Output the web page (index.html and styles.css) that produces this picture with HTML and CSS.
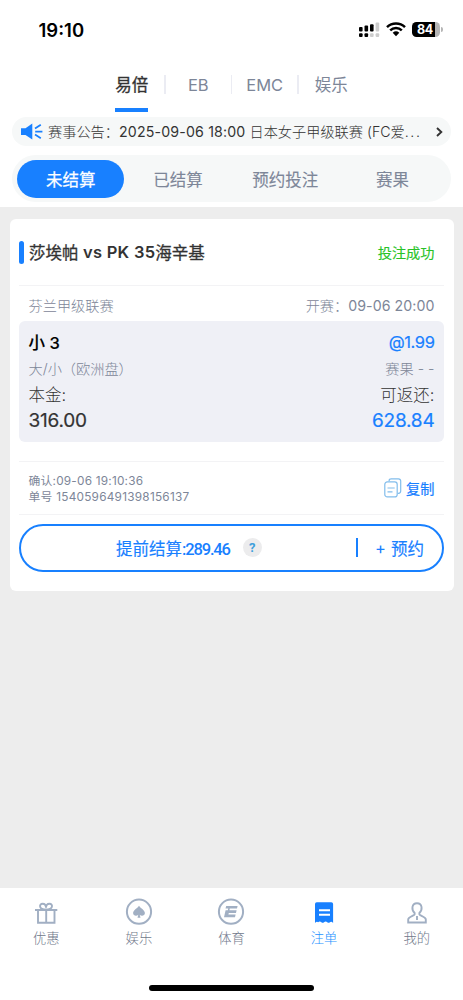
FILE: index.html
```html
<!DOCTYPE html>
<html lang="zh-CN">
<head>
<meta charset="utf-8">
<meta name="viewport" content="width=device-width, initial-scale=1">
<title>注单</title>
<link rel="stylesheet" href="styles.css">
</head>
<body>
<div class="app">
  <header class="status">
    <span class="clock">19:10</span>
    <div class="indicators">
      <svg class="signal" width="21" height="16" viewBox="0 0 21 16">
        <g fill="#000"><rect x="0" y="5" width="3.6" height="4.6" rx="1"/><rect x="5.5" y="3.6" width="3.6" height="6" rx="1"/><rect x="11" y="2.3" width="3.6" height="7.3" rx="1"/><rect x="0" y="11.3" width="3.6" height="3.8" rx="1"/><rect x="5.5" y="11.3" width="3.6" height="3.8" rx="1"/></g>
        <g fill="#ccc"><rect x="16.6" y="0.6" width="3.6" height="9" rx="1"/><rect x="11" y="11.3" width="3.6" height="3.8" rx="1"/><rect x="16.6" y="11.3" width="3.6" height="3.8" rx="1"/></g>
      </svg>
      <svg class="wifi" width="20" height="15" viewBox="0 0 20 15">
        <path d="M1 5.1A13 13 0 0 1 19 5.1M4.2 8.4a8.4 8.4 0 0 1 11.6 0" fill="none" stroke="#000" stroke-width="2.5"/>
        <path d="M6.7 10.8a5 5 0 0 1 6.6 0L10 14.2z"/>
      </svg>
      <div class="battery"><span class="level">84</span></div>
    </div>
  </header>

  <nav class="brands">
    <a class="brand active">易倍</a><a class="brand">EB</a><a class="brand">EMC</a><a class="brand">娱乐</a>
  </nav>

  <div class="notice">
    <svg class="horn" width="22" height="17" viewBox="0 0 22 17">
      <path d="M0 5.2h4.5L11.3.4v16.2L4.5 12H0z" fill="#1880ff"/>
      <path d="M14 5.5l5.8-3.7M14.2 8.6h7.2M14 11.6l5.8 3.6" stroke="#1880ff" stroke-width="1.8" fill="none"/>
    </svg>
    <span class="notice-text">赛事公告：<span class="notice-date">2025-09-06 18:00</span> 日本女子甲级联赛 (FC爱<span class="dots">...</span></span>
    <svg class="chevron" width="7" height="10" viewBox="0 0 7 10"><path d="M1 1l4.3 4L1 9" fill="none" stroke="#333" stroke-width="1.9"/></svg>
  </div>

  <nav class="segments">
    <a class="segment active">未结算</a><a class="segment">已结算</a><a class="segment">预约投注</a><a class="segment">赛果</a>
  </nav>

  <main class="content">
    <article class="card">
      <div class="card-head">
        <h2 class="match">莎埃帕<span class="latin"> vs PK 35</span>海辛基</h2>
        <span class="state">投注成功</span>
      </div>
      <div class="league"><span>芬兰甲级联赛</span><span>开赛：<span class="kickoff">09-06 20:00</span></span></div>
      <div class="bet">
        <div class="row pick"><b>小 3</b><span class="odds">@1.99</span></div>
        <div class="row market"><span>大/小（欧洲盘）</span><span>赛果 - -</span></div>
        <div class="row caption"><span>本金:</span><span>可返还:</span></div>
        <div class="row money"><span>316.00</span><span class="return">628.84</span></div>
      </div>
      <div class="receipt">
        <div class="receipt-text"><div class="confirm">确认:09-06 19:10:36</div><div class="serial">单号 1540596491398156137</div></div>
        <a class="copy">
          <svg width="18" height="20" viewBox="0 0 18 20" fill="none" stroke="#82bdec" stroke-width="1.2"><path d="M5.1 3.3V2.8Q5.1.8 7.2.8h7.2q2.3 0 2.3 2.3v10q0 2.2-2.2 2.2h-.8"/><rect x=".8" y="3.9" width="12.4" height="15" rx="2.5"/><path d="M3.5 10h7.2M3.5 13.9h5"/></svg>
          复制
        </a>
      </div>
      <div class="cashout">
        <span class="cash-main">提前结算<span class="cash-amount">:289.46</span></span>
        <span class="help">?</span>
        <span class="reserve"><span class="plus">+</span>预约</span>
      </div>
    </article>
  </main>

  <footer class="tabbar">
    <a class="tab">
      <svg width="28" height="28" viewBox="0 0 28 28" fill="none" stroke="#a1afc3" stroke-width="1.9"><path d="M3 12h22.3M6 12v12.7h16.5V12M14.2 12v12.7M14 11.5C6.500 11.500 7 5.800 10.600 5.800c2.400 0 3.400 1.600 3.400 4 0-2.400 1-4 3.500-4 3.600 0 4 5.700-3.500 5.700"/></svg>
      优惠
    </a>
    <a class="tab">
      <svg width="28" height="28" viewBox="0 0 28 28"><circle cx="14" cy="13.700" r="12.1" fill="none" stroke="#a1afc3" stroke-width="2"/><path d="M14 7.700c1.100 2.200 5.900 4.200 5.900 7.400 0 2.900-3.800 3.500-5.200 1.600l.8 3h-3l.8-3c-1.400 1.900-5.200 1.300-5.200-1.600 0-3.200 4.800-5.200 5.900-7.400z" fill="#a1afc3"/></svg>
      娱乐
    </a>
    <a class="tab">
      <svg width="28" height="28" viewBox="0 0 28 28"><circle cx="14" cy="13.700" r="12.1" fill="none" stroke="#a1afc3" stroke-width="2"/><path d="M9.200 8h11.400l-.6 2.600h-7.200l-.4 1.700h7.200l-.6 2.600h-7.200l-.4 1.700h7.200l-.6 2.700H7l1.600-7h2.200l.4-1.700H8.500z" fill="#a1afc3"/></svg>
      体育
    </a>
    <a class="tab current">
      <svg width="28" height="28" viewBox="0 0 28 28"><path d="M5 6q0-1.800 1.800-1.800h14.500q1.800 0 1.800 1.800v19q-1.600-1.800-3.200-.8-1.300 1-2.600 0-1.600-1.300-3.300 0-1.300 1-2.600 0-1.600-1.300-3.300 0Q6.600 23.200 5 25z" fill="#1880ff"/><path d="M9 12.300h11M9 16.800h11" stroke="#fff" stroke-width="1.900"/></svg>
      注单
    </a>
    <a class="tab">
      <svg width="28" height="28" viewBox="0 0 28 28" fill="none" stroke="#a1afc3" stroke-width="1.900"><path d="M11.600 15C8.500 12.300 8.200 5.200 14 5.200s5.500 7.100 2.400 9.800v1.500c0 1 6.400 2.500 6.400 5v3H5.200v-3c0-2.500 6.400-4 6.400-5zM14 18v4"/></svg>
      我的
    </a>
  </footer>
  <div class="home"><span class="home-bar"></span></div>
</div>
</body>
</html>
```

FILE: styles.css
```css
* { box-sizing: border-box; }
body { margin: 0; background: #fff; }
.app {
  width: 463px;
  height: 1000px;
  display: flex;
  flex-direction: column;
  overflow: hidden;
  font-family: Inter, "Noto Sans CJK SC", sans-serif;
  font-size: 14px;
  color: #333;
  white-space: nowrap;
}
svg { display: block; flex: none; }

.status {
  height: 60px;
  padding: 0 23px 0 38.5px;
  display: flex;
  align-items: center;
  justify-content: space-between;
  color: #000;
}
.clock { font-size: 18.5px; font-weight: 600; padding-bottom: 1px; }
.indicators { display: flex; align-items: center; padding-bottom: 1px; }
.wifi { margin-left: 6px; }
.battery {
  margin-left: 6px;
  width: 28px;
  height: 15px;
  border-radius: 4.5px;
  background: linear-gradient(90deg, #000 82%, #b5b5b5 82%);
  position: relative;
}
.battery::after {
  content: "";
  position: absolute;
  left: 29px;
  top: 5px;
  width: 1.5px;
  height: 5px;
  border-radius: 0 2px 2px 0;
  background: #b5b5b5;
}
.level { display: block; text-align: center; padding-right: 2px; color: #fff; font-size: 12.5px; font-weight: 700; line-height: 15px; letter-spacing: -.2px; }

.brands { height: 57px; padding: 0 98.5px; display: flex; }
.brand {
  flex: 1;
  height: 52px;
  display: flex;
  justify-content: center;
  line-height: 50px;
  font-size: 16.5px;
  color: #7d8698;
  position: relative;
}
.brand + .brand::before { content: ""; position: absolute; left: -1px; top: 15px; width: 1.5px; height: 19px; background: #ebecf3; }
.brand.active { color: #333; -webkit-text-stroke: .35px #333; }
.brand.active::after { content: ""; position: absolute; left: 16.5px; bottom: 0; width: 33px; height: 4.5px; background: #1880ff; }

.notice {
  margin: 0 12px;
  height: 29px;
  border-radius: 15px;
  background: #f6f8f8;
  display: flex;
  align-items: center;
  padding: 0 8px 0 9px;
}
.notice-text { flex: 1; margin-left: 5px; padding-bottom: 1px; font-size: 14.2px; font-weight: 300; }
.notice-date { font-weight: 400; letter-spacing: .16px; }
.dots { letter-spacing: 1.6px; }

.segments {
  margin: 9px 12px 5px;
  height: 47px;
  flex: none;
  border-radius: 24px;
  background: #f6f8f8;
  display: flex;
  padding: 5px 5px 4px;
}
.segment { flex: 1; border-radius: 19px; text-align: center; font-size: 16.5px; line-height: 40px; height: 38px; color: #7d8698; -webkit-text-stroke: .12px; }
.segment.active { color: #fff; background: #1880ff; -webkit-text-stroke: .25px; }

.content { height: 681px; flex: none; background: #ededed; padding: 12px 9.5px; }
.card { height: 371.5px; background: #fff; border-radius: 6px; padding: 0 9.5px; }
.card-head {
  height: 67px;
  border-bottom: 1px solid #f3f3f5;
  display: flex;
  align-items: center;
  justify-content: space-between;
  padding-right: 9.5px;
}
.match { margin: 0; display: flex; align-items: center; font-size: 16.5px; font-weight: 400; -webkit-text-stroke: .3px; white-space: pre; }
.match::before { content: ""; width: 5px; height: 23px; border-radius: 3px; background: #1880ff; margin-right: 5px; }
.latin { font-weight: 600; letter-spacing: .28px; -webkit-text-stroke: 0; }
.state { color: #28c328; font-size: 14.2px; -webkit-text-stroke: .15px; }
.league { height: 34.5px; padding: 4px 9.5px 0; display: flex; justify-content: space-between; align-items: center; font-size: 14.2px; font-weight: 300; color: #7d8698; }
.kickoff { font-weight: 400; letter-spacing: .06px; }
.bet { height: 121.5px; border-radius: 6px; background: #eff0f6; padding: 8px 9.5px; }
.row { display: flex; justify-content: space-between; align-items: center; height: 27px; }
.pick { height: 26px; font-size: 16.5px; color: #000; }
.pick b { font-weight: 500; -webkit-text-stroke: .15px; }
.odds { color: #1880ff; letter-spacing: -.4px; -webkit-text-stroke: .2px; }
.market { height: 26px; font-size: 14.2px; font-weight: 300; color: #7d8698; }
.caption { font-size: 16.5px; font-weight: 300; height: 27px; }
.money { font-size: 19px; height: 25px; letter-spacing: -.2px; padding-top: 1px; -webkit-text-stroke: .2px; }
.return { color: #1880ff; }

.receipt {
  margin-top: 19px;
  height: 53.5px;
  border-top: 1px solid #f3f3f5;
  border-bottom: 1px solid #f3f3f5;
  padding: 1px 9.5px 0;
  display: flex;
  align-items: center;
  justify-content: space-between;
}
.receipt-text { padding-top: 2px; font-size: 11.8px; line-height: 16.5px; color: #7d8698; }
.confirm { letter-spacing: .22px; }
.serial { letter-spacing: .25px; }
.copy { display: flex; align-items: center; gap: 4px; color: #1880ff; font-size: 14.2px; -webkit-text-stroke: .2px #1880ff; }
.cashout {
  margin-top: 9px;
  height: 48px;
  border: 2px solid #1880ff;
  border-radius: 24px;
  display: flex;
  align-items: center;
  padding: 0 18px 0 95px;
  color: #1880ff;
  font-size: 16.5px;
}
.cash-main { -webkit-text-stroke: .15px; }
.cash-amount { font-family: Roboto, sans-serif; font-weight: 500; letter-spacing: -1.15px; -webkit-text-stroke: 0; }
.help { margin-left: 13px; width: 19px; height: 19px; border-radius: 50%; background: #ececed; color: #40a0dc; text-align: center; font: 700 13px/20px Roboto, sans-serif; }
.reserve { margin-left: auto; height: 19px; border-left: 2px solid #1880ff; padding-left: 17px; display: flex; align-items: center; -webkit-text-stroke: .15px; }
.plus { margin-right: 5px; -webkit-text-stroke: 0; }

.tabbar { height: 72px; display: flex; }
.tab { flex: 1; display: flex; flex-direction: column; align-items: center; padding-top: 10px; font-size: 13.3px; font-weight: 300; line-height: 21px; color: #6f788a; }
.tab svg { margin-bottom: 2px; }
.tab.current { color: #1e91ff; }
.home { display: flex; justify-content: center; padding-top: 24.5px; }
.home-bar { width: 165px; height: 6px; border-radius: 3px; background: #000; }
```
